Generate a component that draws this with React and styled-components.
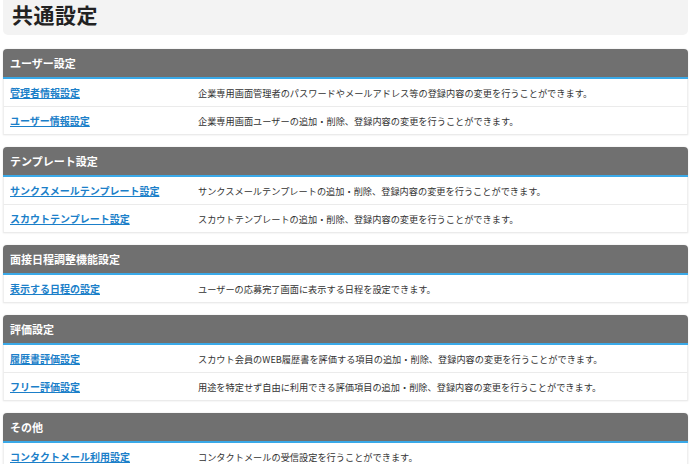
import styled, { createGlobalStyle } from "styled-components";

const GlobalStyle = createGlobalStyle`
	body {
		margin: 0;
		background: #fff;
		font-family: "Noto Sans CJK JP", "Noto Sans", sans-serif;
		color: #333;
	}
`;

const sections = [
	{
		title: "ユーザー設定",
		items: [
			["管理者情報設定", "企業専用画面管理者のパスワードやメールアドレス等の登録内容の変更を行うことができます。"],
			["ユーザー情報設定", "企業専用画面ユーザーの追加・削除、登録内容の変更を行うことができます。"],
		],
	},
	{
		title: "テンプレート設定",
		items: [
			["サンクスメールテンプレート設定", "サンクスメールテンプレートの追加・削除、登録内容の変更を行うことができます。"],
			["スカウトテンプレート設定", "スカウトテンプレートの追加・削除、登録内容の変更を行うことができます。"],
		],
	},
	{
		title: "面接日程調整機能設定",
		items: [["表示する日程の設定", "ユーザーの応募完了画面に表示する日程を設定できます。"]],
	},
	{
		title: "評価設定",
		items: [
			["履歴書評価設定", "スカウト会員のWEB履歴書を評価する項目の追加・削除、登録内容の変更を行うことができます。"],
			["フリー評価設定", "用途を特定せず自由に利用できる評価項目の追加・削除、登録内容の変更を行うことができます。"],
		],
	},
	{
		title: "その他",
		items: [["コンタクトメール利用設定", "コンタクトメールの受信設定を行うことができます。"]],
	},
];

export default function App() {
	return (
		<>
			<GlobalStyle />
			<Page>
				<TitleBox>
					<Title>共通設定</Title>
				</TitleBox>
				{sections.map((s) => (
					<Card key={s.title}>
						<CardHeader>{s.title}</CardHeader>
						{s.items.map(([label, desc]) => (
							<Row key={label}>
								<LinkCell>
									<SettingLink href="#">{label}</SettingLink>
								</LinkCell>
								<Desc>{desc}</Desc>
							</Row>
						))}
					</Card>
				))}
			</Page>
		</>
	);
}

const Page = styled.div`
	padding: 0 4px 0 3px;
	display: flex;
	flex-direction: column;
	gap: 12px;
`;

const TitleBox = styled.div`
	height: 35px;
	box-sizing: border-box;
	background: #f3f3f3;
	border-radius: 0 0 5px 5px;
	padding: 0 9px;
	margin-bottom: 2px;
`;

const Title = styled.h1`
	margin: 0;
	font-size: 21px;
	line-height: 28px;
	font-weight: bold;
	color: #222;
	letter-spacing: 0.5px;
`;

const Card = styled.section`
	background: #fff;
	border-radius: 4px 4px 0 0;
	box-shadow: 0 0 2px rgba(0, 0, 0, 0.12);
`;

const CardHeader = styled.h2`
	margin: 0;
	height: 28px;
	line-height: 28px;
	padding: 0 7px;
	background: #707070;
	border-bottom: 2px solid #3aa9e8;
	border-radius: 4px 4px 0 0;
	color: #fff;
	font-size: 11px;
	font-weight: bold;
`;

const Row = styled.div`
	display: grid;
	grid-template-columns: 194px 1fr;
	align-items: center;
	height: 27px;
	border-bottom: 1px solid #ebebeb;
	border-left: 1px solid #efefef;
	border-right: 1px solid #efefef;
`;

const LinkCell = styled.div`
	padding-left: 6px;
	font-size: 10px;
	line-height: 14px;
`;

const SettingLink = styled.a`
	color: #1b7fc9;
	font-weight: bold;
	text-decoration: underline;
`;

const Desc = styled.p`
	margin: 0;
	font-size: 9.2px;
	line-height: 14px;
	color: #333;
	white-space: nowrap;
`;
